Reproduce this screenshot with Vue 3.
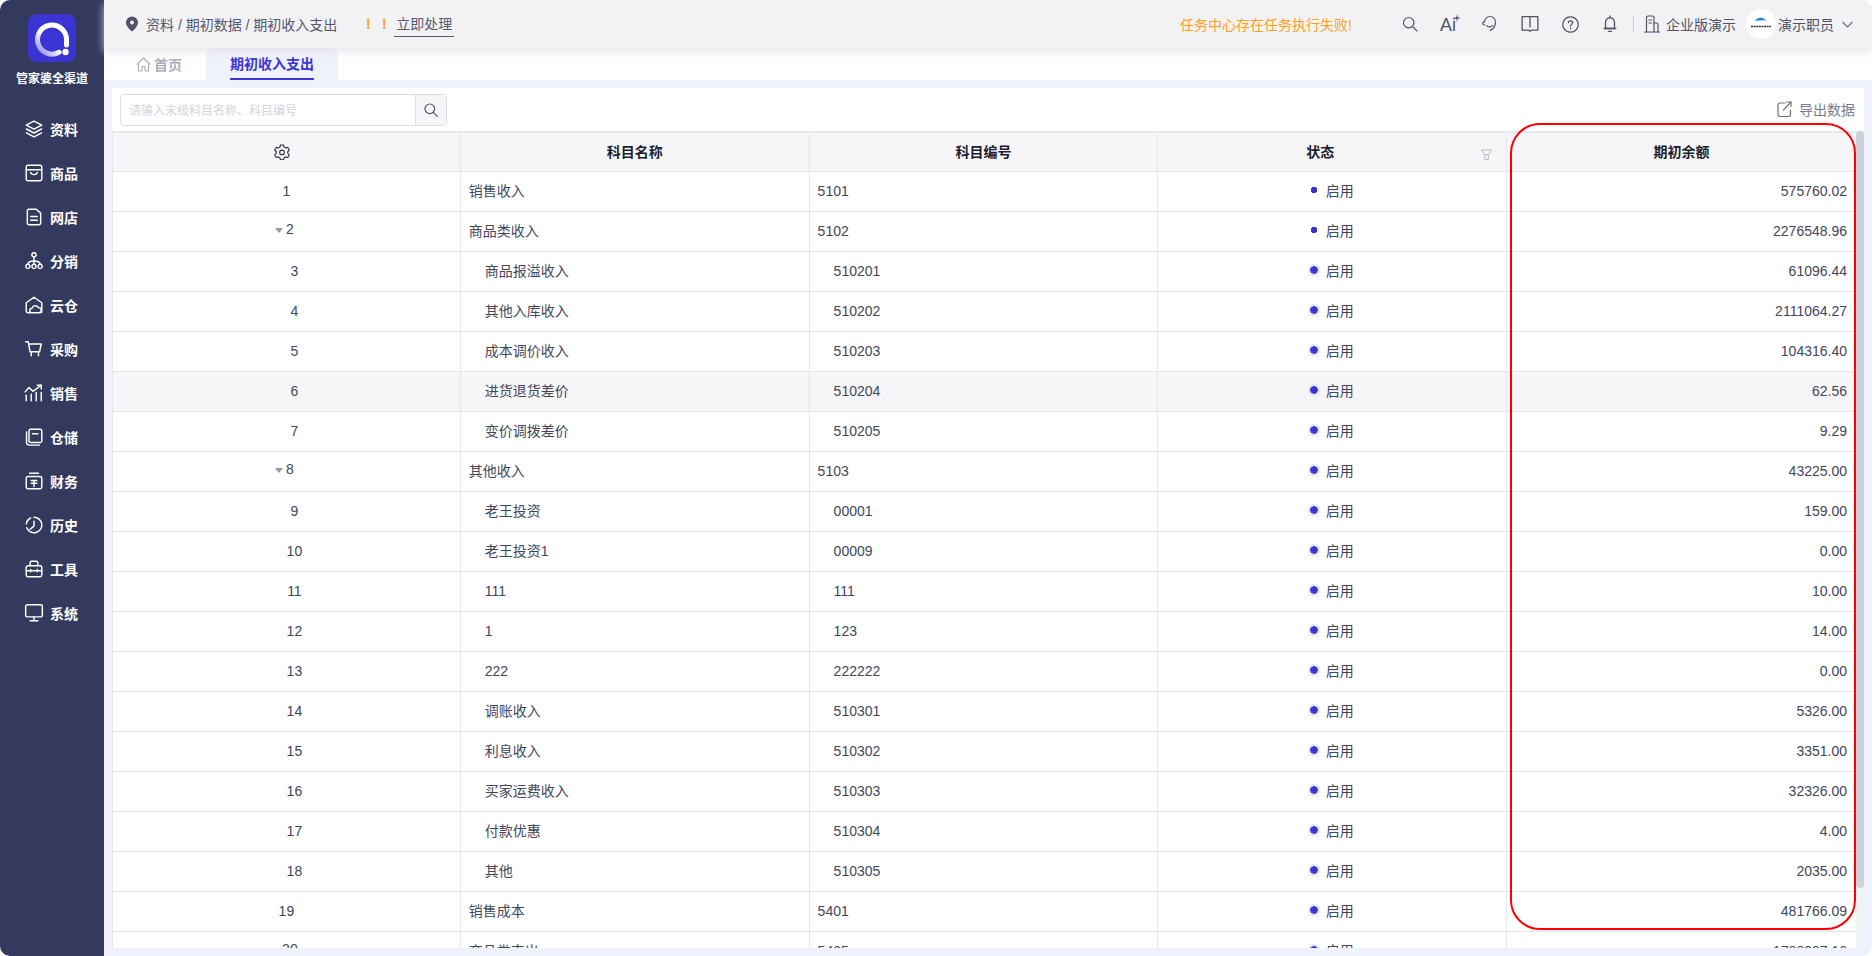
<script setup>
const nav = [
  { label: '资料', d: ['M9 2 16 5.6 9 9.2 2 5.6Z', 'M2.2 9 9 12.6 15.8 9', 'M2.2 12.4 9 16 15.8 12.4'] },
  { label: '商品', d: ['M3.5 2h11A1.5 1.5 0 0 1 16 3.5v11a1.5 1.5 0 0 1-1.5 1.5h-11A1.5 1.5 0 0 1 2 14.5v-11A1.5 1.5 0 0 1 3.5 2Z', 'M2 6h14', 'M6 8.5c.5 2.6 5.500 2.600 6 0'] },
  { label: '网店', d: ['M4 2h7l4 3.500V14.500A1.500 1.500 0 0 1 13.500 16h-9A1.500 1.500 0 0 1 3 14.500v-11A1.500 1.500 0 0 1 4 2Z', 'M6 8.500h6', 'M6 12h6'] },
  { label: '分销', d: ['M9 1.500a1.900 1.900 0 1 1-.01 0Z', 'M9 5.300V9', 'M3.500 12C3.500 10 5 9 9 9s5.500 1 5.500 3', 'M9 9v3', 'M3.500 12a1.900 1.900 0 1 1-.01 0Z', 'M9 12a1.900 1.900 0 1 1-.01 0Z', 'M14.500 12a1.900 1.900 0 1 1-.01 0Z'] },
  { label: '云仓', d: ['M5.500 16H3.500A1.500 1.500 0 0 1 2 14.500V7l7-5 7 5v7.500A1.500 1.500 0 0 1 15.500 16', 'M7 16a2 2 0 0 1 .2-4 3 3 0 0 1 5.600-.6 2.300 2.300 0 0 1 .7 4.600Z'] },
  { label: '采购', d: ['M1.500 2.500h2.300l1.700 9h8.500l1.500-7H4.300', 'M6.500 11.500V15', 'M13 11.500V15'] },
  { label: '销售', d: ['M1 8l3.500-4 3.500 3.500L15.500 2', 'M12 2h3.500v3.500', 'M2 11v5', 'M6.500 10v6', 'M11 8.500V16', 'M15.500 8.500V16'] },
  { label: '仓储', d: ['M6 2h8.500A1.500 1.500 0 0 1 16 3.500v9a1.500 1.500 0 0 1-1.500 1.500H6A1.500 1.500 0 0 1 4.500 12.500v-9A1.500 1.500 0 0 1 6 2Z', 'M7.500 6h5', 'M2.300 4.500V14A2.500 2.500 0 0 0 4.800 16.300H14'] },
  { label: '财务', d: ['M3.500 5h11A1.500 1.500 0 0 1 16 6.500v8a1.500 1.500 0 0 1-1.500 1.500h-11A1.500 1.500 0 0 1 2 14.500v-8A1.500 1.500 0 0 1 3.500 5Z', 'M5 2h8', 'M6.500 8.500h5', 'M6.500 11h5', 'M9 8.500V14'] },
  { label: '历史', d: ['M9 2a7 7 0 1 1-6.500 9.500', 'M2.100 8A7 7 0 0 1 6 2.700', 'M9 5.500V10L5.500 12.800'] },
  { label: '工具', d: ['M3.500 6h11A1.500 1.500 0 0 1 16 7.500v7a1.500 1.500 0 0 1-1.500 1.500h-11A1.500 1.500 0 0 1 2 14.500v-7A1.500 1.500 0 0 1 3.500 6Z', 'M5.500 6V3.500A1.500 1.500 0 0 1 7 2h4a1.500 1.500 0 0 1 1.500 1.500V6', 'M2 10.500h14', 'M6 9.500v2', 'M12 9.500v2'] },
  { label: '系统', d: ['M3 1.500h12A1.500 1.500 0 0 1 16.500 3v8a1.500 1.500 0 0 1-1.500 1.500H3A1.500 1.500 0 0 1 1.500 11V3A1.500 1.500 0 0 1 3 1.500Z', 'M9 12.500V16', 'M5.500 16h7'] }
]

const tools = [
  { s: 16, d: ['M6.700 1.500a5.200 5.200 0 1 1-.01 0Z', 'M10.500 10.500 15 15'] },
  { ai: true },
  { s: 18, d: ['M3.500 7a5.500 5.500 0 0 1 11 0c0 1-.1 2-.5 3-.7 2.500-2.500 4.500-5 5.500', 'M3.200 6.500C2 7 1.500 8 2 9.200l1.500.8', 'M5.500 10.500c1.500 1.800 4.500 1.800 6 0'], vb: 18 },
  { s: 18, d: ['M1 1.500h14v12H9.200L8 14.500 6.800 13.500H1Z', 'M8 1.500V10.500'] },
  { s: 17, d: ['M8 .8a7.200 7.200 0 1 1-.01 0Z', 'M6 6.300C6 3.900 10 3.900 10 6.300c0 1.500-2 1.700-2 3.400', 'M8 11.400v.8'] },
  { s: 18, d: ['M8 2.500c-2.800 0-4 2-4 4.500v5H12V7c0-2.500-1.200-4.500-4-4.500Z', 'M8 .8v1.700', 'M2.800 12h10.400', 'M6.800 14.600h2.400'] }
]

const base = [
  [1, 0, '销售收入', '5101', '575760.02'],
  [2, 0, '商品类收入', '5102', '2276548.96', true],
  [3, 1, '商品报溢收入', '510201', '61096.44'],
  [4, 1, '其他入库收入', '510202', '2111064.27'],
  [5, 1, '成本调价收入', '510203', '104316.40'],
  [6, 1, '进货退货差价', '510204', '62.56'],
  [7, 1, '变价调拨差价', '510205', '9.29'],
  [8, 0, '其他收入', '5103', '43225.00', true],
  [9, 1, '老王投资', '00001', '159.00'],
  [10, 1, '老王投资1', '00009', '0.00'],
  [11, 1, '111', '111', '10.00'],
  [12, 1, '1', '123', '14.00'],
  [13, 1, '222', '222222', '0.00'],
  [14, 1, '调账收入', '510301', '5326.00'],
  [15, 1, '利息收入', '510302', '3351.00'],
  [16, 1, '买家运费收入', '510303', '32326.00'],
  [17, 1, '付款优惠', '510304', '4.00'],
  [18, 1, '其他', '510305', '2035.00'],
  [19, 0, '销售成本', '5401', '481766.09'],
  [20, 0, '商品类支出', '5405', '1788087.16', true]
]
const rows = base.map(([no, level, name, code, amount, caret]) => ({
  no, level, name, code, amount, caret: !!caret, cjk: /[^\x00-\x7f]/.test(name)
}))
</script>

<template>
  <div class="app">
    <aside class="side">
      <div class="logo">
        <svg width="48" height="48" viewBox="0 0 48 48">
          <defs>
            <linearGradient id="ringGrad" x1="1" y1="0" x2="0" y2="1">
              <stop offset="0" stop-color="#ffffff" />
              <stop offset="0.55" stop-color="#ffffff" />
              <stop offset="1" stop-color="#8582e6" />
            </linearGradient>
          </defs>
          <rect width="48" height="48" rx="9" fill="#3a35d2" />
          <path d="M31 38.300A14.500 14.500 0 1 1 38.500 25.500V31" fill="none" stroke="url(#ringGrad)" stroke-width="5" stroke-linecap="round" />
          <circle cx="37.500" cy="38" r="3.200" fill="#fff" />
        </svg>
      </div>
      <div class="brand">管家婆全渠道</div>
      <nav class="nav">
        <div v-for="item in nav" :key="item.label" class="nav-item">
          <svg width="20" height="20" viewBox="0 0 18 18" fill="none" stroke="#fff" stroke-width="1.300" stroke-linecap="round" stroke-linejoin="round">
            <path v-for="(p, i) in item.d" :key="i" :d="p" />
          </svg>
          <span>{{ item.label }}</span>
        </div>
      </nav>
    </aside>

    <main class="main">
      <header class="top">
        <svg class="pin" width="14" height="16" viewBox="0 0 14 16">
          <path fill="#50536a" fill-rule="evenodd" d="M7 .5a6 6 0 0 1 6 6c0 3.600-3.500 6.800-6 9-2.500-2.200-6-5.400-6-9a6 6 0 0 1 6-6Zm0 4a2 2 0 1 0 .01 0Z" />
        </svg>
        <span class="crumb">资料 / 期初数据 / 期初收入支出</span>
        <span class="bang">!</span>
        <span class="bang">!</span>
        <span class="now">立即处理</span>
        <span class="warn">任务中心存在任务执行失败!</span>
        <div class="tools">
          <div v-for="(t, i) in tools" :key="i" class="tool">
            <template v-if="t.ai">
              <span class="ai">Ai</span>
              <svg class="spark" width="8" height="8" viewBox="0 0 8 8"><path d="M4 0 4.700 3.300 8 4 4.700 4.700 4 8 3.300 4.700 0 4 3.300 3.300Z" fill="#50536a" /></svg>
            </template>
            <svg v-else :width="t.s" :height="t.s" :viewBox="t.vb ? '0 0 18 18' : '0 0 16 16'" fill="none" stroke="#50536a" stroke-width="1.150" stroke-linecap="round" stroke-linejoin="round">
              <path v-for="(p, j) in t.d" :key="j" :d="p" />
            </svg>
          </div>
        </div>
        <span class="divider"></span>
        <svg class="building" width="16" height="18" viewBox="0 0 16 18" fill="none" stroke="#50536a" stroke-width="1.200" stroke-linejoin="round" stroke-linecap="round">
          <path d="M0.500 17h15" />
          <path d="M2.500 17V2.500A1.500 1.500 0 0 1 4 1h4.500A1.500 1.500 0 0 1 10 2.500V17" />
          <path d="M10 8h2.500A1.500 1.500 0 0 1 14 9.500V17" />
          <path d="M5 5h2.500M5 8h2.500" />
        </svg>
        <span class="org">企业版演示</span>
        <div class="avatar">
          <svg width="30" height="30" viewBox="0 0 30 30">
            <circle cx="15" cy="15" r="15" fill="#fff" />
            <path d="M9 12c2-3.500 6-4 8.500-2.500l3 2c-4-.6-7.500-.4-11.500.5Z" fill="#1586e0" />
            <path d="M5 17.500h20" stroke="#33364a" stroke-width="1.600" stroke-dasharray="2 .6" />
          </svg>
        </div>
        <span class="user">演示职员</span>
        <svg class="chev" width="11" height="7" viewBox="0 0 11 7" fill="none" stroke="#6a6d80" stroke-width="1.100"><path d="M.5 1 5.500 6l5-5" /></svg>
      </header>

      <div class="tabs">
        <div class="tab-home">
          <svg width="15" height="15" viewBox="0 0 15 15" fill="none" stroke="#a9adba" stroke-width="1.100" stroke-linejoin="round"><path d="M.8 7.500 7.500 1l6.700 6.500" /><path d="M2.500 6.500V14h3.500V9.500h3V14h3.500V6.500" /></svg>
          <span>首页</span>
        </div>
        <div class="tab-active"><span>期初收入支出</span></div>
      </div>

      <section class="body">
        <div class="card">
          <div class="toolbar">
            <div class="search">
              <span class="placeholder">请输入末级科目名称、科目编号</span>
              <button class="search-btn" type="button">
                <svg width="14" height="14" viewBox="0 0 14 14" fill="none" stroke="#50536a" stroke-width="1.200" stroke-linecap="round"><circle cx="5.800" cy="5.800" r="4.800" /><path d="m9.300 9.300 4 4" /></svg>
              </button>
            </div>
            <div class="export">
              <svg width="15" height="16" viewBox="0 0 15 16" fill="none" stroke="#6f7285" stroke-width="1.200" stroke-linecap="round" stroke-linejoin="round"><path d="M8 2H3a2 2 0 0 0-2 2v9.500a2 2 0 0 0 2 2h8.500a2 2 0 0 0 2-2V9" /><path d="M6.500 9 14 1" /><path d="M9.500 1H14v4.500" /></svg>
              <span>导出数据</span>
            </div>
          </div>
          <div class="table-wrap">
            <div class="table-view">
              <table class="grid">
                <thead>
                  <tr>
                    <th class="th-gear">
                      <svg width="16" height="16" viewBox="0 0 16 16" fill="none" stroke="#2d3044" stroke-width="1.100" stroke-linejoin="round">
                        <path d="M6.500 1h3l.5 2 1.800 1 2-.6 1.500 2.600-1.500 1.500v1.900l1.500 1.500-1.500 2.600-2-.6-1.800 1-.5 2h-3l-.5-2-1.800-1-2 .6L.7 10.900 2.200 9.400V7.500L.7 6l1.500-2.600 2 .6 1.800-1Z" />
                        <circle cx="8" cy="8.400" r="2.300" />
                      </svg>
                    </th>
                    <th>科目名称</th>
                    <th>科目编号</th>
                    <th class="th-state">
                      状态
                      <svg class="filter" width="11" height="11" viewBox="0 0 11 11" fill="none" stroke="#b9bbc6" stroke-width="1"><path d="M.5 1h10L8 5.500H3Z" /><path d="M3.700 5.500v5h3.600v-5" /></svg>
                    </th>
                    <th>期初余额</th>
                  </tr>
                </thead>
                <tbody>
                  <tr v-for="r in rows" :key="r.no" :class="{ hover: r.no === 6 }">
                    <td class="c-no" :class="{ 'lvl-1': r.level === 1, 'has-caret': r.caret }">
                      <i v-if="r.caret" class="caret"></i>{{ r.no }}
                    </td>
                    <td :class="[r.level === 1 ? 'lvl-text' : 'root-text', { 'c-cjk': r.cjk }]">{{ r.name }}</td>
                    <td :class="r.level === 1 ? 'lvl-text' : 'root-text'">{{ r.code }}</td>
                    <td class="c-state">
                      <span class="state">
                        <i class="dot" :class="{ halo: r.no > 2 }"></i>启用
                      </span>
                    </td>
                    <td class="c-amt">{{ r.amount }}</td>
                  </tr>
                </tbody>
              </table>
            </div>
            <div class="scroll"><div class="thumb"></div></div>
          </div>
        </div>
      </section>
    </main>

    <div class="mark"></div>
  </div>
</template>

<style>
html, body { margin: 0; background: #fff; }
</style>

<style scoped>
.app {
  position: relative;
  display: flex;
  width: 100%;
  height: 956px;
  overflow: hidden;
  border-radius: 10px;
  font-family: "Liberation Sans", "Noto Sans CJK SC", sans-serif;
  font-size: 14px;
  color: #3c3f55;
}
.side {
  flex: none;
  width: 104px;
  background: #343a5e;
  display: flex;
  flex-direction: column;
  align-items: center;
}
.logo { margin-top: 14px; height: 48px; }
.brand { margin-top: 9px; font-size: 12px; font-weight: 700; color: #fff; line-height: 16px; }
.nav { margin-top: 20px; width: 100%; }
.nav-item {
  height: 44px;
  display: flex;
  align-items: center;
  padding-left: 24px;
  gap: 6px;
  color: #fff;
  font-weight: 700;
  font-size: 14px;
}
.main { flex: 1; min-width: 0; display: flex; flex-direction: column; }
.top {
  flex: none;
  height: 48px;
  display: flex;
  align-items: center;
  background: #f2f2f5;
  box-shadow: 0 4px 8px rgba(225, 225, 232, .8);
  position: relative;
  z-index: 1;
  padding-left: 21px;
  padding-right: 19px;
}
.crumb { margin-left: 7px; color: #55586c; white-space: nowrap; }
.bang { color: #ff9f1c; font-weight: 700; width: 16px; text-align: center; }
.crumb + .bang { margin-left: 23px; }
.now { margin-left: 2px; padding: 0 2px 2px; margin-top: 3px; border-bottom: 1px solid #55586c; color: #55586c; line-height: 20px; }
.warn { margin-left: auto; color: #ff9f1c; white-space: nowrap; }
.tools { display: flex; margin-left: 38px; }
.tool { position: relative; width: 40px; height: 24px; display: flex; align-items: center; justify-content: center; }
.ai { font-size: 18px; color: #50536a; line-height: 24px; margin: 2px 4px 0 0; }
.spark { position: absolute; right: 9px; top: 2px; }
.divider { width: 1px; height: 16px; background: #c3c7e8; margin-left: 3px; }
.building { margin-left: 10px; }
.org { margin-left: 6px; color: #50536a; white-space: nowrap; }
.avatar { width: 30px; height: 30px; margin-left: 10px; }
.user { margin-left: 2px; color: #50536a; white-space: nowrap; }
.chev { margin-left: 8px; }
.tabs {
  flex: none;
  height: 32px;
  background: #fff;
  display: flex;
  align-items: stretch;
  padding-left: 32px;
}
.tab-home {
  width: 70px;
  display: flex;
  align-items: center;
  gap: 3px;
  color: #a9adba;
  font-weight: 700;
}
.tab-active {
  width: 132px;
  background: #eff1fd;
  border-radius: 8px 8px 0 0;
  display: flex;
  justify-content: center;
}
.tab-active span {
  height: 32px;
  line-height: 32px;
  box-sizing: border-box;
  border-bottom: 2px solid #3a35d2;
  color: #3a35d2;
  font-weight: 700;
}
.body { flex: 1; min-height: 0; background: #eff1fd; padding: 8px; display: flex; }
.card { flex: 1; min-width: 0; background: #fff; display: flex; flex-direction: column; }
.toolbar {
  flex: none;
  height: 43px;
  display: flex;
  align-items: flex-start;
  justify-content: space-between;
  padding: 6px 9px 0 8px;
  box-sizing: border-box;
}
.search {
  width: 327px;
  height: 32px;
  box-sizing: border-box;
  border: 1px solid #dcdde6;
  border-radius: 4px;
  display: flex;
  align-items: center;
  overflow: hidden;
}
.placeholder { flex: 1; padding: 0 0 2px 8px; font-size: 12px; color: #d3d5dd; white-space: nowrap; }
.search-btn {
  width: 31px;
  height: 30px;
  padding: 0;
  border: 0;
  border-left: 1px solid #dcdde6;
  background: #f6f6f9;
  display: flex;
  align-items: center;
  justify-content: center;
}
.export { display: flex; align-items: center; gap: 7px; height: 32px; padding-bottom: 2px; box-sizing: border-box; color: #7a7d90; white-space: nowrap; }
.table-wrap { flex: 1; min-height: 0; display: flex; }
.table-view { flex: 1; min-width: 0; overflow: hidden; }
.grid { width: 100%; table-layout: fixed; border-collapse: separate; border-spacing: 0; }
.grid th {
  height: 41px;
  box-sizing: border-box;
  background: #f6f6f9;
  border-top: 2px solid #e8e8ee;
  border-bottom: 1px solid #e6e6ec;
  border-right: 1px solid #e6e6ec;
  font-weight: 700;
  color: #1d1f2e;
  font-size: 14px;
  padding: 0 0 2px;
}
.grid th:first-child, .grid td:first-child { border-left: 1px solid #e6e6ec; }
.grid th:last-child, .grid td:last-child { border-right: 0; }
.th-gear { padding-right: 8px !important; }
.th-gear svg { vertical-align: middle; }
.th-state { position: relative; padding-right: 24px !important; }
.filter { position: absolute; right: 14px; top: 16px; }
.grid td {
  height: 40px;
  box-sizing: border-box;
  border-bottom: 1px solid #e6e6ec;
  border-right: 1px solid #e6e6ec;
  padding: 0 0 2px 8px;
  white-space: nowrap;
  color: #43465a;
}
.grid tr.hover td { background: #f6f6f9; }
.grid td.c-no { text-align: center; padding: 0 0 2px; }
.grid td.c-no.lvl-1 { padding-left: 16px; }
.grid td.c-no.has-caret { padding: 0 4px 6px 0; }
.caret {
  display: inline-block;
  width: 0;
  height: 0;
  border-left: 4px solid transparent;
  border-right: 4px solid transparent;
  border-top: 5px solid #9a9a9f;
  margin-right: 3px;
  vertical-align: 1px;
}
.grid td.lvl-text { padding-left: 24px; }
.grid td.c-cjk { padding-bottom: 4px; }
.grid td.c-state { text-align: center; padding: 0 3px 4px 0; }
.state { display: inline-flex; align-items: center; gap: 6px; }
.dot {
  width: 12px;
  height: 12px;
  border-radius: 50%;
  display: inline-flex;
  align-items: center;
  justify-content: center;
  background: radial-gradient(circle, #3a35d2 0 3px, transparent 3.500px);
}
.dot.halo { background: radial-gradient(circle, #3a35d2 0 3.500px, #e1e3f9 4px); }
.grid td.c-amt { text-align: right; padding: 0 9px 2px 0; }
.scroll { flex: none; width: 8px; background: #f1f2f6; }
.thumb { width: 8px; height: 757px; background: #cdd2da; border-radius: 4px; }
.mark {
  position: absolute;
  left: 1510px;
  top: 123px;
  width: 346px;
  height: 807px;
  box-sizing: border-box;
  border: 2px solid #ff0000;
  border-radius: 30px;
  pointer-events: none;
}
</style>
